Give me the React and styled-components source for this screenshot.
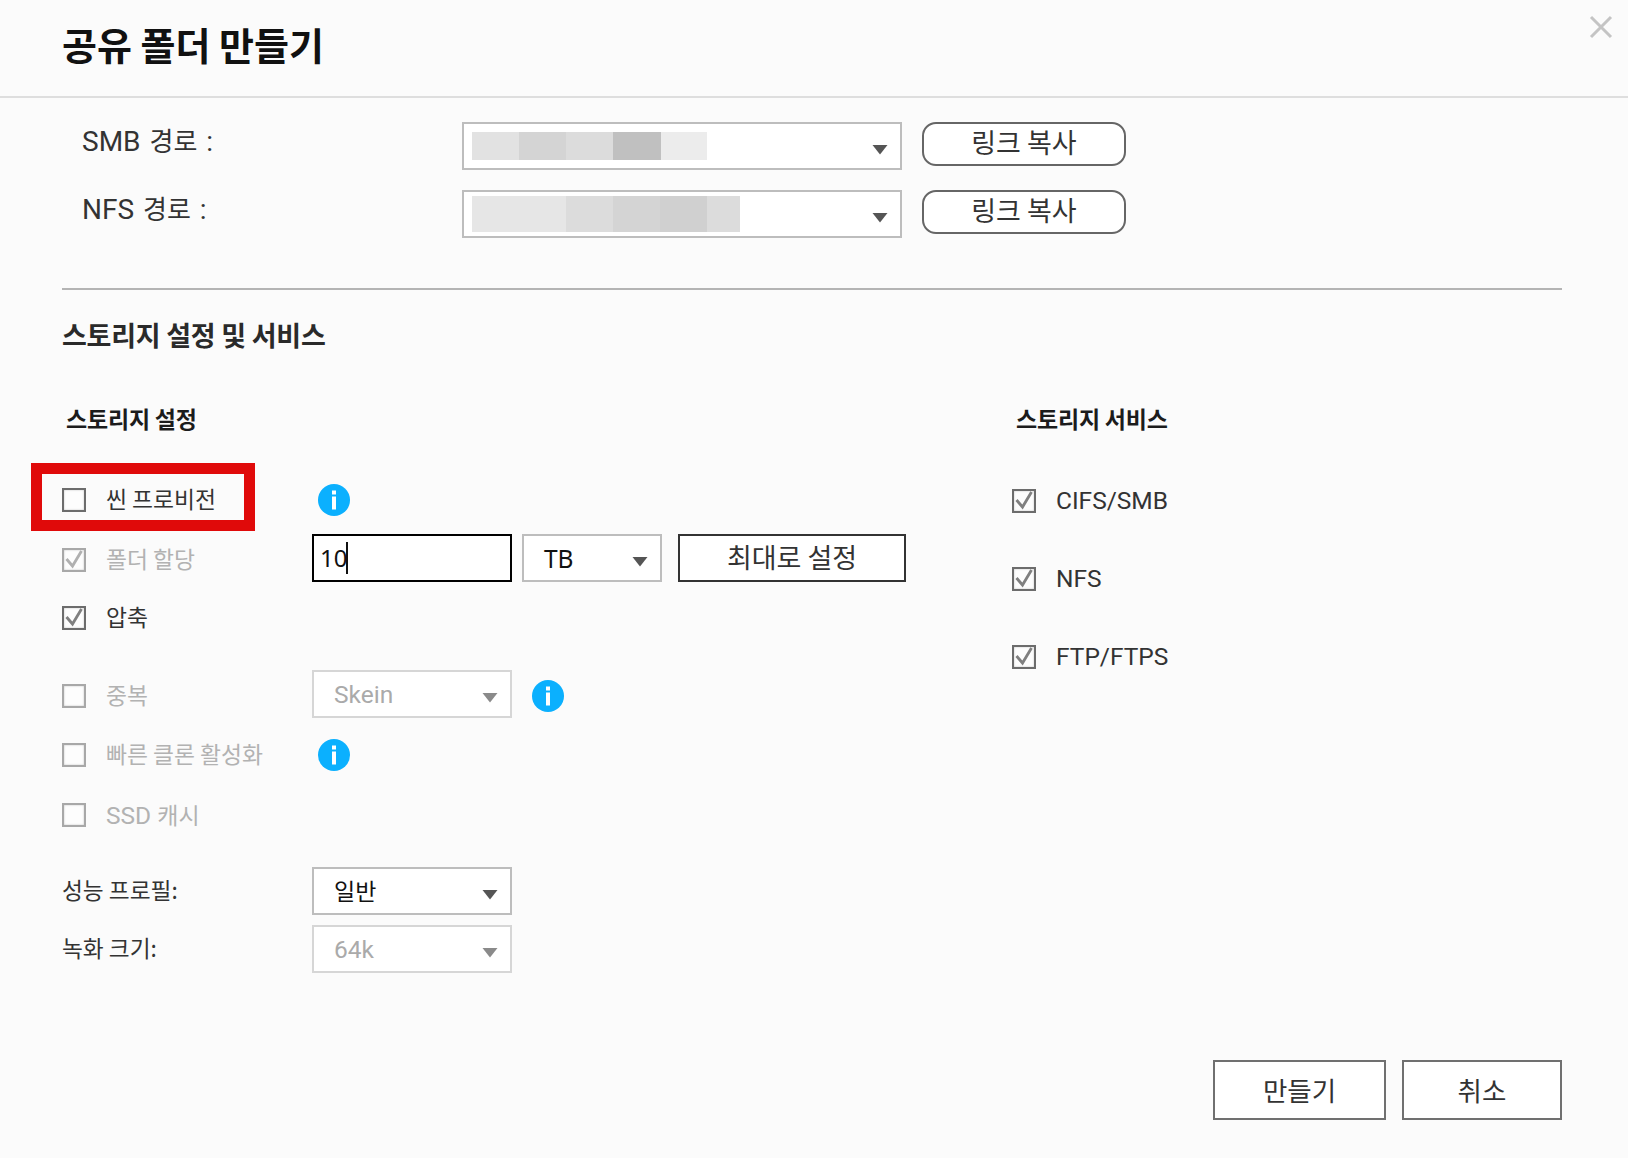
import React from "react";
import styled, { createGlobalStyle } from "styled-components";

const Global = createGlobalStyle`
  html, body { margin: 0; padding: 0; background: #fbfbfb; }
  * { box-sizing: border-box; }
  body { font-family: Roboto, "Noto Sans CJK KR", sans-serif; color: #333; }
`;

const Page = styled.div`
  position: relative;
  width: 1628px;
  height: 1158px;
  overflow: hidden;
  display: flex;
  flex-direction: column;
  background: #fbfbfb;
`;
const Header = styled.header`
  height: 98px;
  flex: none;
  border-bottom: 2px solid #dedede;
  padding: 19px 0 0 62px;
`;
const Title = styled.h1`
  margin: 0;
  font: 700 38px/50px "Noto Sans CJK KR", sans-serif;
  color: #111;
`;
const Close = styled.svg`
  position: absolute;
  left: 1589px;
  top: 15px;
  width: 24px;
  height: 24px;
  filter: blur(0.5px);
`;
const Main = styled.main`
  flex: 1;
  padding: 24px 66px 0 62px;
`;
const PathRow = styled.div`
  display: flex;
  align-items: flex-start;
  margin-top: ${(p) => p.$mt || 0}px;
  padding-left: 20px;
`;
const PathLabel = styled.div`
  width: 380px;
  font-size: 28px;
  line-height: 36px;
  word-spacing: 2px;
  color: #333;
`;
const Hangul = styled.span`
  font-family: "Noto Sans CJK KR", sans-serif;
  font-size: ${(p) => p.$size || 23}px;
`;
const PathSelect = styled.div`
  position: relative;
  width: 440px;
  height: 48px;
  background: #fff;
  border: 2px solid #bdbdbd;
  display: flex;
  align-items: center;
  padding-left: 8px;
`;
const Blur = styled.div`
  display: flex;
  height: ${(p) => p.$h}px;
`;
const BlurCell = styled.div`
  width: ${(p) => p.$w}px;
  background: ${(p) => p.$c};
`;
const Arrow = styled.svg`
  position: absolute;
  right: ${(p) => p.$right}px;
  top: ${(p) => p.$top}px;
  width: 16px;
  height: 11px;
  filter: blur(0.4px);
`;
const PillButton = styled.button`
  width: 204px;
  height: 44px;
  margin-left: 20px;
  background: #fff;
  border: 2px solid #666;
  border-radius: 14px;
  font: 400 27px/1 "Noto Sans CJK KR", sans-serif;
  color: #333;
  padding: 0 0 6px;
`;
const Rule = styled.hr`
  margin: 50px 0 0;
  border: 0;
  height: 2px;
  background: #b4b4b4;
`;
const SectionTitle = styled.h2`
  margin: 25px 0 0;
  font: 700 27px/40px "Noto Sans CJK KR", sans-serif;
  letter-spacing: -0.25px;
  color: #2a2a2a;
`;
const Columns = styled.div`
  display: grid;
  grid-template-columns: 950px 1fr;
  margin-top: 45px;
`;
const SubTitle = styled.h3`
  margin: 0 0 40px 4px;
  font: 700 23px/36px "Noto Sans CJK KR", sans-serif;
  letter-spacing: -0.2px;
  color: #1c1c1c;
`;
const Row = styled.div`
  position: relative;
  display: grid;
  grid-template-columns: 250px 1fr;
  grid-template-rows: 48px;
  align-items: center;
  height: 48px;
  margin-top: ${(p) => p.$mt || 0}px;
`;
const CheckLabel = styled.label`
  display: flex;
  align-items: center;
  gap: 20px;
`;
const LabelText = styled.span`
  font: 400 22.8px/30px "Noto Sans CJK KR", sans-serif;
  color: ${(p) => (p.$off ? "#b2b2b2" : "#333")};
  margin-top: -2px;
`;
const LatinText = styled.span`
  font: 400 24.5px/30px Roboto, "Noto Sans CJK KR", sans-serif;
  color: ${(p) => (p.$off ? "#b2b2b2" : "#333")};
  white-space: nowrap;
`;
const Box = styled.span`
  flex: none;
  width: 24px;
  height: 24px;
  display: block;
  background: #fdfdfd;
  border: 2.5px solid ${(p) => (p.$off ? "#a8a8a8" : "#6c6c6c")};
  box-shadow: inset 0 0 2px rgba(0, 0, 0, 0.25);
`;
const CheckMark = styled.svg`
  display: block;
  width: 19px;
  height: 19px;
  filter: blur(0.5px);
`;
const Highlight = styled.div`
  position: absolute;
  left: -31px;
  top: -13px;
  width: 224px;
  height: 68px;
  border: 11.5px solid #e00a0a;
  pointer-events: none;
`;
const Controls = styled.div`
  display: flex;
  align-items: center;
  margin-bottom: ${(p) => p.$up || 0}px;
`;
const InfoWrap = styled.svg`
  display: block;
  width: 32px;
  height: 32px;
  margin-left: ${(p) => p.$ml}px;
  margin-top: ${(p) => p.$mt || 0}px;
  flex: none;
`;
const Field = styled.div`
  width: 200px;
  height: 48px;
  display: flex;
  align-items: center;
  padding-left: 6px;
  background: #fff;
  border: 2px solid #000;
  font: 400 24px/1 "Noto Sans", sans-serif;
  color: #111;
`;
const Caret = styled.span`
  display: block;
  width: 2px;
  height: 32px;
  background: #111;
  margin-left: -1px;
`;
const Select = styled.div`
  position: relative;
  flex: none;
  width: ${(p) => p.$w || 200}px;
  height: 48px;
  margin-left: ${(p) => p.$ml || 0}px;
  display: flex;
  align-items: center;
  padding: 2px 0 0 20px;
  background: #fff;
  border: 2px solid ${(p) => (p.$off ? "#d6d6d6" : "#bdbdbd")};
  font: 400 24.5px/1 ${(p) => (p.$noto ? '"Noto Sans"' : "Roboto")}, "Noto Sans CJK KR", sans-serif;
  color: ${(p) => (p.$off ? "#aaa" : "#111")};
`;
const SelectHangul = styled.span`
  font: 400 23px/1 "Noto Sans CJK KR", sans-serif;
  margin-top: -4px;
`;
const MaxButton = styled.button`
  width: 228px;
  height: 48px;
  margin-left: 16px;
  background: #fff;
  border: 2px solid #333;
  font: 400 27px/1 "Noto Sans CJK KR", sans-serif;
  color: #333;
  padding: 0 0 3px;
`;
const ServiceList = styled.div`
  display: flex;
  flex-direction: column;
  gap: 30px;
  padding-top: 1px;
`;
const ServiceRow = styled.div`
  display: flex;
  align-items: center;
  gap: 20px;
  height: 48px;
`;
const PlainLabel = styled.div`
  font: 400 22.7px/30px "Noto Sans CJK KR", sans-serif;
  color: #333;
  margin-top: -2px;
`;
const Footer = styled.footer`
  flex: none;
  display: flex;
  justify-content: flex-end;
  gap: 16px;
  padding: 0 66px 38px 0;
`;
const FootButton = styled.button`
  width: ${(p) => p.$w}px;
  height: 60px;
  background: #fff;
  border: 2px solid #707070;
  font: 400 26.5px/1 "Noto Sans CJK KR", sans-serif;
  color: #333;
  padding: 0;
`;

const Tri = ({ right, top, color = "#555" }) => (
  <Arrow $right={right} $top={top} viewBox="0 0 16 11">
    <path d="M0.5 1h15L8 10.5z" fill={color} />
  </Arrow>
);

const Check = ({ on, off }) => (
  <Box $off={off}>
    {on && (
      <CheckMark viewBox="0 0 19 19">
        <path d="M2.5 9l6 7L17.5 1" fill="none" stroke={off ? "#b0b0b0" : "#808080"} strokeWidth="2.8" />
      </CheckMark>
    )}
  </Box>
);

const Info = ({ ml = 6, mt }) => (
  <InfoWrap $ml={ml} $mt={mt} viewBox="0 0 32 32">
    <circle cx="16" cy="16" r="16" fill="#0bb0fe" />
    <rect x="14" y="6.5" width="4" height="4" fill="#fff" />
    <rect x="14" y="12.5" width="4" height="13" fill="#fff" />
  </InfoWrap>
);

const smb = [[47, "#e2e2e2"], [47, "#d4d4d4"], [47, "#dcdcdc"], [48, "#c0c0c0"], [46, "#ececec"]];
const nfs = [[47, "#e6e6e6"], [47, "#e6e6e6"], [47, "#dcdcdc"], [47, "#d4d4d4"], [47, "#d0d0d0"], [33, "#dcdcdc"]];

const PathLine = ({ name, cells, h, mt }) => (
  <PathRow $mt={mt}>
    <PathLabel>
      {name} <Hangul $size={26}>경로</Hangul> :
    </PathLabel>
    <PathSelect>
      <Blur $h={h}>
        {cells.map(([w, c], i) => (
          <BlurCell key={i} $w={w} $c={c} />
        ))}
      </Blur>
      <Tri right={12} top={20} />
    </PathSelect>
    <PillButton>링크 복사</PillButton>
  </PathRow>
);

export default function App() {
  return (
    <Page>
      <Global />
      <Header>
        <Title>공유 폴더 만들기</Title>
      </Header>
      <Close viewBox="0 0 24 24">
        <path d="M2 2l20 20M22 2L2 22" stroke="#c4c4c4" strokeWidth="3" fill="none" />
      </Close>
      <Main>
        <PathLine name="SMB" cells={smb} h={28} />
        <PathLine name="NFS" cells={nfs} h={36} mt={20} />
        <Rule />
        <SectionTitle>스토리지 설정 및 서비스</SectionTitle>
        <Columns>
          <section>
            <SubTitle>스토리지 설정</SubTitle>
            <Row>
              <CheckLabel>
                <Check />
                <LabelText>씬 프로비전</LabelText>
              </CheckLabel>
              <Controls>
                <Info />
              </Controls>
              <Highlight />
            </Row>
            <Row $mt={12}>
              <CheckLabel>
                <Check on off />
                <LabelText $off>폴더 할당</LabelText>
              </CheckLabel>
              <Controls $up={4}>
                <Field>
                  10
                  <Caret />
                </Field>
                <Select $w={140} $ml={10} $noto>
                  TB
                  <Tri right={12} top={20} />
                </Select>
                <MaxButton>최대로 설정</MaxButton>
              </Controls>
            </Row>
            <Row $mt={10}>
              <CheckLabel>
                <Check on />
                <LabelText>압축</LabelText>
              </CheckLabel>
            </Row>
            <Row $mt={30}>
              <CheckLabel>
                <Check off />
                <LabelText $off>중복</LabelText>
              </CheckLabel>
              <Controls $up={4}>
                <Select $off>
                  Skein
                  <Tri right={12} top={20} color="#8a8a8a" />
                </Select>
                <Info ml={20} mt={4} />
              </Controls>
            </Row>
            <Row $mt={11}>
              <CheckLabel>
                <Check off />
                <LabelText $off>빠른 클론 활성화</LabelText>
              </CheckLabel>
              <Controls>
                <Info />
              </Controls>
            </Row>
            <Row $mt={12}>
              <CheckLabel>
                <Check off />
                <LatinText $off>
                  SSD <Hangul>캐시</Hangul>
                </LatinText>
              </CheckLabel>
            </Row>
            <Row $mt={28}>
              <PlainLabel>성능 프로필:</PlainLabel>
              <Controls>
                <Select>
                  <SelectHangul>일반</SelectHangul>
                  <Tri right={12} top={20} />
                </Select>
              </Controls>
            </Row>
            <Row $mt={10}>
              <PlainLabel>녹화 크기:</PlainLabel>
              <Controls>
                <Select $off>
                  64k
                  <Tri right={12} top={20} color="#8a8a8a" />
                </Select>
              </Controls>
            </Row>
          </section>
          <section>
            <SubTitle>스토리지 서비스</SubTitle>
            <ServiceList>
              <ServiceRow>
                <Check on />
                <LatinText>CIFS/SMB</LatinText>
              </ServiceRow>
              <ServiceRow>
                <Check on />
                <LatinText>NFS</LatinText>
              </ServiceRow>
              <ServiceRow>
                <Check on />
                <LatinText>FTP/FTPS</LatinText>
              </ServiceRow>
            </ServiceList>
          </section>
        </Columns>
      </Main>
      <Footer>
        <FootButton $w={173}>만들기</FootButton>
        <FootButton $w={160}>취소</FootButton>
      </Footer>
    </Page>
  );
}
